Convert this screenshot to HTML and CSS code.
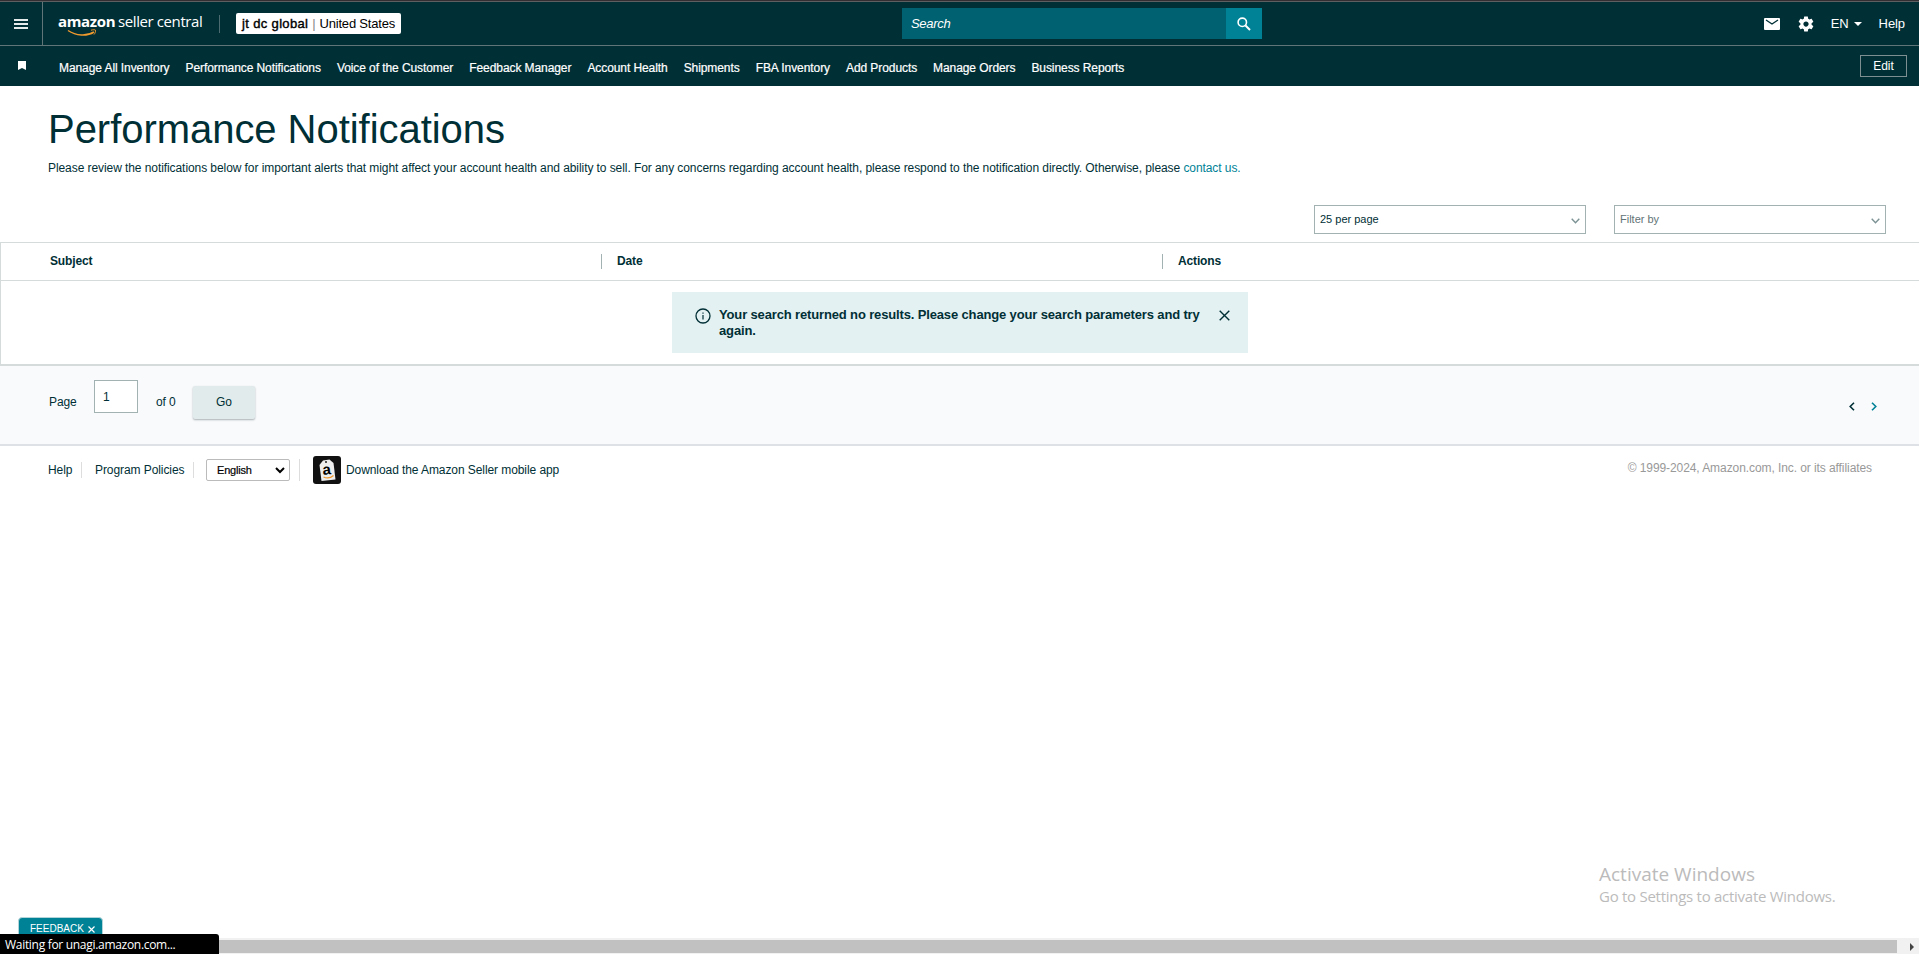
FILE: index.html
```
<!DOCTYPE html>
<html lang="en">
	<head>
		<meta charset="utf-8">
		<title>Performance Notifications</title>
		<link rel="stylesheet" href="styles.css">
	</head>
	<body>
		<header>
			<div class="topbar">
				<div class="menu"><i></i><i></i><i></i></div>
				<div class="logo">
					<b>amazon</b><span>seller central</span>
					<svg class="smile" width="32" height="8" viewBox="0 0 32 8" fill="none" stroke="#f19a2d">
						<path d="M1 1.500C9 7 20 7.500 27 3" stroke-width="1.500"/>
						<path d="M24 1.200C26 .600 28 .600 28.500 1.200C28.800 2.500 28 4.500 27 5.500"/>
					</svg>
				</div>
				<div class="account"><b>jt dc global</b><i>|</i><span>United States</span></div>
				<div class="search">
					<div class="search-text">Search</div>
					<div class="search-btn">
						<svg width="14" height="14" viewBox="0 0 14 14" fill="none" stroke="#fff" stroke-width="1.600"><circle cx="5.300" cy="5.300" r="4.200"/><path d="M8.500 8.500L13 13" stroke-width="2"/></svg>
					</div>
				</div>
				<div class="tools">
					<svg class="mail" width="16" height="12" viewBox="0 0 16 12"><rect width="16" height="12" rx="1" fill="#fff"/><path d="M2 2L8 6L14 2" fill="none" stroke="#002f36" stroke-width="1.300"/></svg>
					<svg class="gear" width="18" height="18" viewBox="0 0 24 24" fill="#fff"><path d="M19.430 12.980c.04-.32.07-.64.07-.98s-.03-.66-.07-.98l2.110-1.650c.19-.15.24-.42.12-.64l-2-3.460c-.12-.22-.39-.3-.61-.22l-2.490 1c-.52-.4-1.080-.73-1.690-.98l-.38-2.650C14.460 2.180 14.250 2 14 2h-4c-.25 0-.46.18-.49.42l-.38 2.650c-.61.25-1.170.59-1.690.98l-2.490-1c-.23-.09-.49 0-.61.22l-2 3.460c-.13.22-.07.49.12.64l2.110 1.650c-.04.32-.07.65-.07.98s.03.66.07.98l-2.110 1.650c-.19.15-.24.42-.12.64l2 3.460c.12.22.39.3.61.22l2.490-1c.52.4 1.080.73 1.690.98l.38 2.650c.03.24.24.42.49.42h4c.25 0 .46-.18.49-.42l.38-2.650c.61-.25 1.170-.59 1.690-.98l2.490 1c.23.09.49 0 .61-.22l2-3.460c.12-.22.07-.49-.12-.64l-2.110-1.650zM12 15.500c-1.930 0-3.500-1.570-3.500-3.500s1.570-3.500 3.500-3.500 3.500 1.570 3.500 3.500-1.570 3.500-3.500 3.500z"/></svg>
					<span class="lang">EN</span><i class="caret"></i>
					<span class="help">Help</span>
				</div>
			</div>
			<div class="favbar">
				<svg class="mark" width="8" height="9" viewBox="0 0 8 9"><path d="M0 0H8V9L4 7L0 9Z" fill="#fff"/></svg>
				<ul>
					<li>Manage All Inventory</li>
					<li>Performance Notifications</li>
					<li>Voice of the Customer</li>
					<li>Feedback Manager</li>
					<li>Account Health</li>
					<li>Shipments</li>
					<li>FBA Inventory</li>
					<li>Add Products</li>
					<li>Manage Orders</li>
					<li>Business Reports</li>
				</ul>
				<div class="edit">Edit</div>
			</div>
		</header>

		<h1>Performance Notifications</h1>
		<p class="intro">Please review the notifications below for important alerts that might affect your account health and ability to sell. For any concerns regarding account health, please respond to the notification directly. Otherwise, please <a>contact us.</a></p>

		<div class="filters">
			<div class="drop">25 per page<svg width="9" height="6" viewBox="0 0 9 6"><path d="M.700.700L4.500 4.700L8.300.700"/></svg></div>
			<div class="drop gray">Filter by<svg width="9" height="6" viewBox="0 0 9 6"><path d="M.700.700L4.500 4.700L8.300.700"/></svg></div>
		</div>

		<div class="table">
			<div class="thead">
				<div><b>Subject</b></div>
				<div><b>Date</b></div>
				<div><b>Actions</b></div>
			</div>
			<div class="alert">
				<svg class="info" width="16" height="16" viewBox="0 0 16 16" fill="none" stroke="#002f36"><circle cx="8" cy="8" r="7" stroke-width="1.300"/><path d="M8 7V11.500M8 4.500V5.700" stroke-width="1.200"/></svg>
				<div class="alert-text">Your search returned no results. Please change your search parameters and try again.</div>
				<svg class="close" width="11" height="11" viewBox="0 0 11 11" stroke="#002f36" stroke-width="1.400"><path d="M.700.700L10.300 10.300M10.300.700L.700 10.300"/></svg>
			</div>
		</div>

		<div class="pager">
			<span>Page</span>
			<div class="page-input">1</div>
			<span class="of">of 0</span>
			<div class="go">Go</div>
			<div class="arrows">
				<svg width="6" height="9" viewBox="0 0 6 9" fill="none" stroke="#002f36" stroke-width="1.600"><path d="M5 .700L1.200 4.500L5 8.300"/></svg>
				<svg width="6" height="9" viewBox="0 0 6 9" fill="none" stroke="#008296" stroke-width="1.600"><path d="M1 .700L4.800 4.500L1 8.300"/></svg>
			</div>
		</div>

		<footer>
			<span class="f-help">Help</span>
			<span class="f-policy">Program Policies</span>
			<div class="f-lang">
				<div class="select">English<svg width="10" height="7" viewBox="0 0 10 7" fill="none" stroke="#000" stroke-width="2"><path d="M1 1L5 5L9 1"/></svg></div>
			</div>
			<svg class="app" width="28" height="28" viewBox="0 0 28 28">
				<rect width="28" height="28" rx="3" fill="#111"/>
				<path d="M6.500 9L10 4.500L16.500 3.500L20.500 7L22.500 23.500L8.500 25Z" fill="#eee"/>
				<circle cx="13" cy="6" r="1" fill="#222"/>
				<text x="9.500" y="18.500" transform="rotate(-6 14 15)" font-size="15">a</text>
				<path d="M10.500 21Q16 23.500 20.500 19.500" fill="none" stroke="#f19a2d" stroke-width="1.300"/>
			</svg>
			<span class="download">Download the Amazon Seller mobile app</span>
			<span class="copy">© 1999-2024, Amazon.com, Inc. or its affiliates</span>
		</footer>

		<!-- overlays -->
		<div class="activate">
			<p>Activate Windows</p>
			<span>Go to Settings to activate Windows.</span>
		</div>
		<div class="feedback">FEEDBACK<svg width="7" height="7" viewBox="0 0 7 7" stroke="#fff" stroke-width="1.200"><path d="M.500.500L6.500 6.500M6.500.500L.500 6.500"/></svg></div>
		<div class="scroll"><div class="thumb"></div><i></i></div>
		<div class="status">Waiting for unagi.amazon.com...</div>
	</body>
</html>
```
FILE: styles.css
```
*{
	margin: 0;
	padding: 0;
	list-style: none;
	box-sizing: border-box;
}
html,body{
	height: 100%;
	overflow: hidden;
}
body{
	position: relative;
	background: #fff;
	color: #002f36;
	font: 12px/16px "Liberation Sans", Arial, sans-serif;
	letter-spacing: -.08px;
}
svg{
	display: block;
	flex: none;
}
span,b,li{
	white-space: nowrap;
}
header{
	border-top: 1px solid #332e31;
	background: #002f36;
	color: #fff;
}
.topbar{
	height: 45px;
	border-top: 1px solid #5d5f60;
	border-bottom: 1px solid #5f7577;
	display: flex;
	align-items: center;
}
.menu{
	width: 43px;
	height: 43px;
	padding: 17px 0 0 14px;
	border-right: 1px solid #5f7577;
}
.menu i{
	display: block;
	width: 14px;
	height: 2px;
	margin-bottom: 2px;
	background: #e5eaeb;
}
.logo{
	position: relative;
	width: 162px;
	height: 23px;
	margin-left: 15px;
	display: flex;
	font: 15px/18px "Open Sans", sans-serif;
	letter-spacing: -.4px;
}
.logo b{
	width: 60px;
	letter-spacing: -.35px;
}
.smile{
	position: absolute;
	left: 9px;
	top: 17px;
}
.account{
	position: relative;
	width: 165px;
	height: 21px;
	margin-left: 16px;
	padding-left: 6px;
	border-radius: 2px;
	background: #fff;
	color: #000;
	font-size: 13px;
	line-height: 21px;
	letter-spacing: -.2px;
	display: flex;
}
.account:before{
	content: "";
	position: absolute;
	left: -17px;
	top: 2px;
	height: 18px;
	border-left: 1px solid #4c6b70;
}
.account b{
	font-weight: normal;
	letter-spacing: .35px;
	-webkit-text-stroke: .4px #000;
}
.account i{
	margin: 0 4px;
	color: #888;
	font-style: normal;
}
.search{
	width: 360px;
	height: 31px;
	margin-left: 501px;
	display: flex;
}
.search-text{
	flex: 1;
	padding-left: 9px;
	background: #006170;
	font-size: 13px;
	font-style: italic;
	line-height: 31px;
	letter-spacing: -.3px;
}
.search-btn{
	width: 36px;
	background: #008296;
	display: flex;
	align-items: center;
	justify-content: center;
}
.tools{
	margin-left: auto;
	padding-right: 14px;
	display: flex;
	align-items: center;
	font-size: 13px;
}
.gear{
	margin: 0 16px 0 17px;
}
.caret{
	margin: 1px 17px 0 5px;
	border: 4px solid transparent;
	border-top-color: #fff;
	border-bottom: 0;
}
.favbar{
	height: 40px;
	display: flex;
	align-items: center;
}
.mark{
	margin: 0 33px 1px 18px;
}
.favbar ul{
	display: flex;
	gap: 16px;
	padding-top: 3px;
	letter-spacing: -.08px;
	-webkit-text-stroke: .2px #fff;
}
.edit{
	width: 47px;
	height: 22px;
	margin-left: auto;
	margin-right: 12px;
	border: 1px solid #7d8f91;
	text-align: center;
	line-height: 20px;
}
h1{
	margin: 17px 0 0 48px;
	font-size: 40px;
	font-weight: normal;
	line-height: 52px;
	letter-spacing: -.04px;
}
.intro{
	margin: 4px 0 0 48px;
	line-height: 18px;
	letter-spacing: -.075px;
}
.intro a{
	color: #008296;
}
.filters{
	height: 65px;
	padding: 28px 33px 0 0;
	display: flex;
	justify-content: flex-end;
	gap: 28px;
}
.drop{
	width: 272px;
	height: 29px;
	padding: 0 5px 2px;
	border: 1px solid #a2b2b3;
	display: flex;
	align-items: center;
	justify-content: space-between;
	font-size: 11px;
	letter-spacing: 0;
}
.drop svg{
	margin-top: 4px;
	fill: none;
	stroke: #7c9294;
	stroke-width: 1.4;
}
.gray{
	color: #627376;
}
.table{
	height: 124px;
	border-top: 1px solid #d5dbdb;
	border-left: 1px solid #d5dbdb;
	border-bottom: 2px solid #d5dbdb;
}
.thead{
	height: 38px;
	border-bottom: 1px solid #d5dbdb;
	display: grid;
	grid-template-columns: 600px 561px 1fr;
	align-items: center;
	letter-spacing: -.15px;
}
.thead div{
	height: 15px;
	margin-bottom: 1px;
	padding-left: 15px;
	border-left: 1px solid #a2b2b3;
	line-height: 14px;
}
.thead div:first-child{
	padding-left: 49px;
	border: 0;
}
.alert{
	width: 576px;
	height: 61px;
	margin: 11px 0 0 671px;
	padding: 15px 18px 0 23px;
	background: #e3f1f2;
	display: flex;
	font-size: 13px;
	font-weight: bold;
	letter-spacing: -.145px;
}
.info{
	margin: 1px 8px 0 0;
}
.alert-text{
	flex: 1;
}
.close{
	margin: 3px 0 0;
}
.pager{
	height: 80px;
	padding-left: 49px;
	border-bottom: 2px solid #dee2e6;
	background: #f9fafc;
	display: flex;
}
.pager span{
	width: 45px;
	padding-top: 28px;
}
.page-input{
	width: 44px;
	height: 33px;
	margin-top: 14px;
	padding-left: 8px;
	border: 1px solid #a2b2b3;
	background: #fff;
	line-height: 33px;
}
.pager .of{
	width: 54px;
	padding-left: 18px;
}
.go{
	width: 62px;
	height: 33px;
	margin: 20px 0 0 1px;
	border-radius: 2px;
	background: #e2ebeb;
	box-shadow: 0 1px 2px #a9b1b3;
	line-height: 32px;
	text-align: center;
}
.arrows{
	margin-left: auto;
	padding: 36px 42px 0 0;
	display: flex;
	gap: 16px;
}
footer{
	padding: 10px 47px 0 48px;
	display: flex;
	align-items: center;
}
.f-help{
	width: 34px;
	border-right: 1px solid #ddd;
}
.f-policy{
	width: 112px;
	padding-left: 13px;
	border-right: 1px solid #ddd;
}
.f-lang{
	width: 106px;
	padding-left: 12px;
	border-right: 1px solid #ddd;
}
.select{
	width: 84px;
	height: 22px;
	padding: 0 4px 0 10px;
	border: 1px solid #bbb;
	border-radius: 2px;
	display: flex;
	align-items: center;
	justify-content: space-between;
	color: #000;
	font-size: 11px;
	letter-spacing: -.2px;
	-webkit-text-stroke: .2px #000;
}
.app{
	margin: 0 5px 0 13px;
	font-weight: bold;
}
.copy{
	margin: -4px 0 0 auto;
	color: #999;
}
.activate{
	position: absolute;
	left: 1599px;
	top: 862px;
	color: #bbb;
	font: 15px/20px "Open Sans", sans-serif;
	letter-spacing: -.27px;
}
.activate p{
	font-size: 19px;
	line-height: 24px;
	letter-spacing: 0;
}
.feedback{
	position: absolute;
	left: 18px;
	top: 917px;
	width: 85px;
	height: 24px;
	padding-left: 11px;
	border: 1px solid #b3d4d8;
	border-radius: 4px 4px 0 0;
	background: #008296;
	color: #fff;
	font-size: 10px;
	line-height: 22px;
	letter-spacing: 0;
	display: flex;
}
.feedback svg{
	margin: 8px 0 0 4px;
}
.scroll{
	position: absolute;
	left: 0;
	bottom: 0;
	width: 100%;
	height: 16px;
	padding-top: 2px;
	background: #f1f1f1;
	display: flex;
}
.thumb{
	width: 1897px;
	height: 13px;
	background: #c1c1c1;
}
.scroll i{
	margin: 3px 0 0 13px;
	border: 4px solid transparent;
	border-left-color: #444;
	border-right: 0;
	height: 8px;
}
.status{
	position: absolute;
	left: 0;
	bottom: 0;
	width: 219px;
	height: 20px;
	padding-left: 5px;
	border-radius: 0 3px 0 0;
	background: #000;
	color: #fff;
	font: 12px/21px "Open Sans", sans-serif;
	letter-spacing: -.3px;
}
```
